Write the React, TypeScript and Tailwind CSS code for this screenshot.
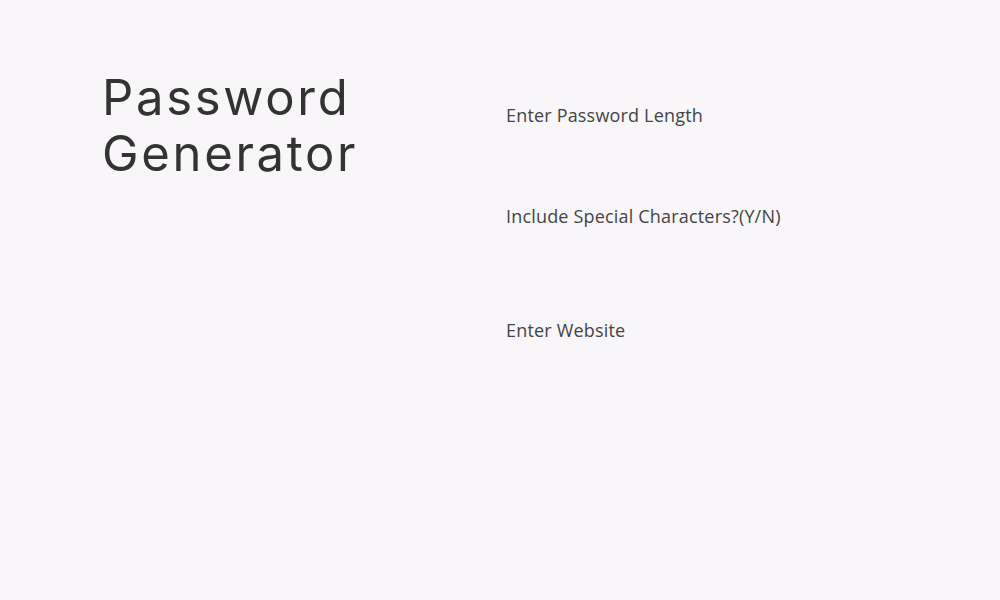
const fields = [
  { label: "Enter Password Length", gap: "mt-[33px]" },
  { label: "Include Special Characters?(Y/N)", gap: "mt-[77px]" },
  { label: "Enter Website", gap: "mt-[90px]" },
];

const App = () => {
  return (
    <div className="min-h-[600px] w-full bg-[#f8f6f8] font-['Open_Sans',sans-serif]">
      <div className="flex pl-[102px] pt-[70px]">
        <div className="w-[404px]">
          <h1 className="font-['Inter',sans-serif] text-[49px] leading-[56px] tracking-[0.055em] text-[#333333]">
            Password
            <br />
            Generator
          </h1>
        </div>
        <div className="flex flex-col">
          {fields.map((f) => (
            <label key={f.label} className={`${f.gap} block text-[18px] leading-[24px] tracking-[0.01em] text-[#444444]`}>
              {f.label}
            </label>
          ))}
        </div>
      </div>
    </div>
  );
};

export default App;
